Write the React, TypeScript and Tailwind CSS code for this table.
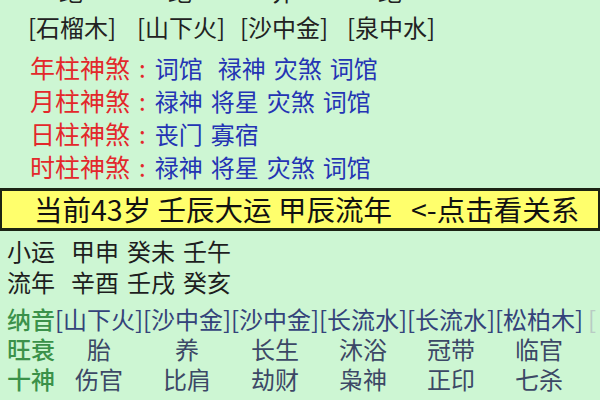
import React from 'react';

const topCut = ['绝', '绝', '养', '绝'];
const nayinTop = ['[石榴木]', '[山下火]', '[沙中金]', '[泉中水]'];
const topCols = ['w-[109px]', 'w-[103px]', 'w-[107px]', 'w-[90px]'];

const shensha = [
  { label: '年柱神煞', items: ['词馆', '禄神', '灾煞', '词馆'], wide: true },
  { label: '月柱神煞', items: ['禄神', '将星', '灾煞', '词馆'], wide: false },
  { label: '日柱神煞', items: ['丧门', '寡宿'], wide: false },
  { label: '时柱神煞', items: ['禄神', '将星', '灾煞', '词馆'], wide: false },
];

const nayin = ['[山下火]', '[沙中金]', '[沙中金]', '[长流水]', '[长流水]', '[松柏木]'];
const wangshuai = ['胎', '养', '长生', '沐浴', '冠带', '临官'];
const shishen = ['伤官', '比肩', '劫财', '枭神', '正印', '七杀'];

const App: React.FC = () => {
  return (
    <div className="w-[600px] h-[400px] overflow-hidden bg-[#cdf6d3] font-['Noto_Sans_CJK_SC','Noto_Sans',sans-serif]">
      {/* cut-off row above */}
      <div className="flex pl-[28px] -mt-[23px] h-[33px] leading-[28px] text-[24px] text-[#222] whitespace-nowrap">
        {topCut.map((c, i) => (
          <div key={i} className={topCols[i]}>
            <span className="inline-block w-[86px] text-center">{c}</span>
          </div>
        ))}
      </div>

      {/* nayin of the four pillars */}
      <div className="flex pl-[28px] h-[33px] leading-[33px] text-[24px] text-[#222] whitespace-nowrap">
        {nayinTop.map((n, i) => (
          <div key={i} className={topCols[i]}>
            {n}
          </div>
        ))}
      </div>

      {/* shensha rows */}
      <div className="mt-[8px] flex flex-col pl-[30px]">
        {shensha.map((row) => (
          <div key={row.label} className="flex items-center h-[33px] leading-[33px] whitespace-nowrap">
            <span className="text-[25px] text-[#e3282b]">{row.label}</span>
            <span className="ml-[9px] text-[24px] text-[#e3282b]">:</span>
            <div className="ml-[9px] flex gap-2 text-[24px] text-[#2434b4]">
              {row.items.map((it, j) => (
                <span key={j} className={row.wide && j === 1 ? 'ml-[7px]' : ''}>
                  {it}
                </span>
              ))}
            </div>
          </div>
        ))}
      </div>

      {/* current luck bar */}
      <div className="mt-[5px] h-[43px] flex items-center pl-[32px] bg-[#ffff6c] border-y-[3px] border-x-2 border-[#1c2414] text-[28.5px] text-[#111] whitespace-pre">
        当前43岁 壬辰大运 甲辰流年   &lt;-点击看关系
      </div>

      {/* small luck / years */}
      <div className="mt-[4px] flex flex-col pl-[7px] text-[24px] text-[#1e1e1e]">
        <div className="flex gap-2 h-[31px] leading-[31px]">
          <span className="mr-[8px]">小运</span>
          <span>甲申</span>
          <span>癸未</span>
          <span>壬午</span>
        </div>
        <div className="flex gap-2 h-[31px] leading-[31px]">
          <span className="mr-[8px]">流年</span>
          <span>辛酉</span>
          <span>壬戌</span>
          <span>癸亥</span>
        </div>
      </div>

      {/* bottom table */}
      <div className="mt-[7px] flex flex-col pl-[7px] text-[24px] whitespace-nowrap">
        <div className="flex h-[30px] leading-[30px]">
          <span className="w-[48px] font-medium text-[#3b9149]">纳音</span>
          {nayin.map((n, i) => (
            <span key={i} className="w-[88px] text-[#34437a]">
              {n}
            </span>
          ))}
          <span className="ml-[5px] text-[#b9cbc4]">[</span>
        </div>
        <div className="flex h-[30px] leading-[30px]">
          <span className="w-[48px] font-medium text-[#3b9149]">旺衰</span>
          {wangshuai.map((n, i) => (
            <span key={i} className="w-[88px] text-center text-[#3c4866]">
              {n}
            </span>
          ))}
        </div>
        <div className="flex h-[30px] leading-[30px]">
          <span className="w-[48px] font-medium text-[#3b9149]">十神</span>
          {shishen.map((n, i) => (
            <span key={i} className="w-[88px] text-center text-[#3c4866]">
              {n}
            </span>
          ))}
        </div>
      </div>
    </div>
  );
};

export default App;
